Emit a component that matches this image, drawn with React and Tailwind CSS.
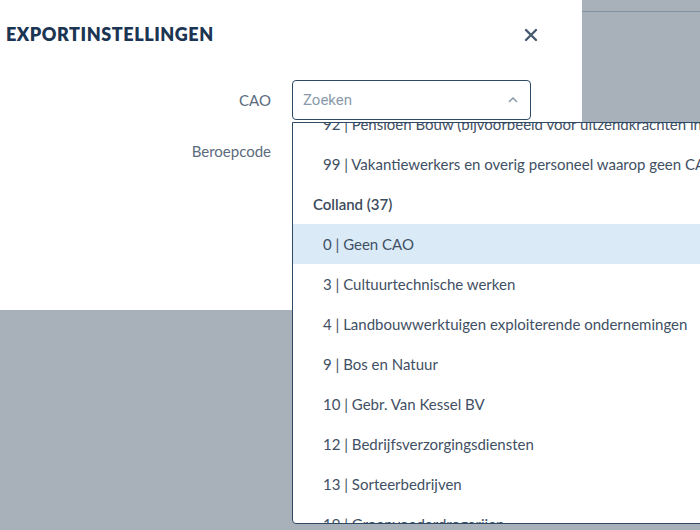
import React from 'react';

const groups = [
  {
    items: [
      '92 | Pensioen Bouw (bijvoorbeeld voor uitzendkrachten in de bouw)',
      '99 | Vakantiewerkers en overig personeel waarop geen CAO van toepassing is',
    ],
  },
  {
    title: 'Colland (37)',
    items: [
      '0 | Geen CAO',
      '3 | Cultuurtechnische werken',
      '4 | Landbouwwerktuigen exploiterende ondernemingen',
      '9 | Bos en Natuur',
      '10 | Gebr. Van Kessel BV',
      '12 | Bedrijfsverzorgingsdiensten',
      '13 | Sorteerbedrijven',
      '19 | Groenvoederdrogerijen',
    ],
  },
];

const font = { fontFamily: '"Source Sans Pro", Lato, "Noto Sans", sans-serif' };

const Option = ({ label, active }) => (
  <div
    className={`h-10 flex items-center pl-[30px] whitespace-nowrap text-[15px] text-[#3f5064] ${
      active ? 'bg-[#dbeaf7]' : ''
    }`}
  >
    {label}
  </div>
);

const App = () => (
  <div className="relative w-[700px] h-[530px] overflow-hidden bg-[#a8b1ba]" style={font}>
    <div className="h-3 border-b border-[#8393a2]" />

    <div className="absolute top-0 left-0 w-[582px] h-[310px] bg-white">
      <div className="flex items-center justify-between pl-[6px] pr-[44px] pt-[21px]">
        <h2 className="text-[18px] font-extrabold tracking-[0.03em] text-[#1c3553]">EXPORTINSTELLINGEN</h2>
        <svg width="14" height="14" viewBox="0 0 14 14" className="text-[#475a70]">
          <path d="M2 2l10 10M12 2L2 12" stroke="currentColor" strokeWidth="2.4" strokeLinecap="round" />
        </svg>
      </div>

      <div className="grid grid-cols-[271px_239px] gap-x-[21px] mt-[32px] text-[15px] text-[#5b6b7e]">
        <label className="text-right self-center">CAO</label>
        <div className="h-10 border border-[#2f4a66] rounded-[4px] flex items-center justify-between pl-[10px] pr-[12px]">
          <span className="text-[#8a9aab]" style={{ fontFamily: 'Roboto, sans-serif' }}>Zoeken</span>
          <svg width="10" height="6" viewBox="0 0 10 6">
            <path d="M1 5l4-4 4 4" fill="none" stroke="#8a9aab" strokeWidth="1.5" />
          </svg>
        </div>
        <label className="text-right mt-[20px]">Beroepcode</label>
        <div />
      </div>
    </div>

    {/* open CAO menu */}
    <div className="absolute left-[292px] top-[122px] w-[460px] h-[402px] bg-white border border-[#2f4a66] rounded-bl-[4px] overflow-hidden">
      <div className="-mt-[19px]">
        {groups.map((g, gi) => (
          <div key={gi}>
            {g.title && (
              <div className="h-10 flex items-center pl-[20px] text-[15px] font-semibold text-[#3b4a5c]">{g.title}</div>
            )}
            {g.items.map((it) => (
              <Option key={it} label={it} active={it === '0 | Geen CAO'} />
            ))}
          </div>
        ))}
      </div>
    </div>
  </div>
);

export default App;
